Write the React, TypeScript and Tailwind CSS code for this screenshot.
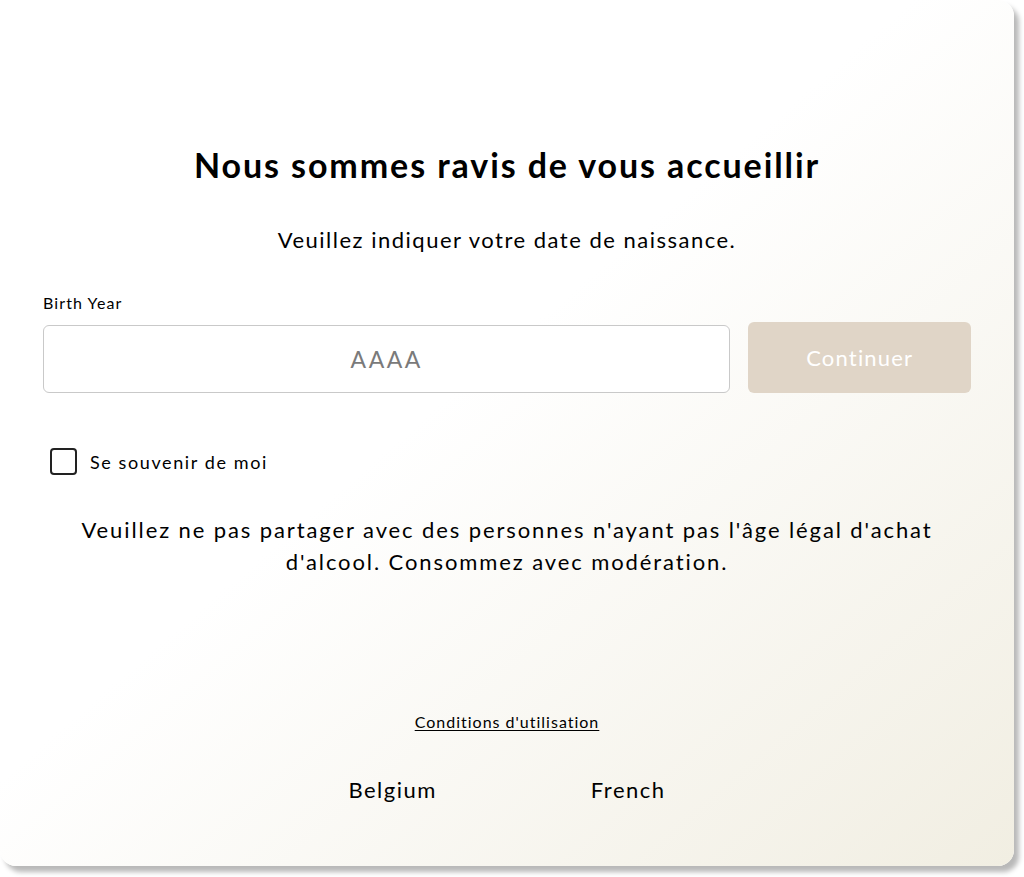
import { useState } from 'react';

export default function App() {
  const [remember, setRemember] = useState(false);
  const [year, setYear] = useState('');

  return (
    <div className="w-[1024px] h-[877px] bg-white overflow-hidden" style={{ fontFamily: 'Lato, "Open Sans", sans-serif' }}>
      <div className="w-[1014px] h-[866px] rounded-2xl bg-gradient-to-br from-white from-45% to-[#f1eee2] shadow-[5px_6px_5px_rgba(0,0,0,0.28)] flex flex-col items-center text-black px-[43px]">
        {/* Heading */}
        <h1 className="mt-[141px] text-[34px] font-bold leading-[48px] tracking-[1.9px]">Nous sommes ravis de vous accueillir</h1>
        <p className="mt-[36px] text-[22px] leading-[30px] tracking-[1.5px]">Veuillez indiquer votre date de naissance.</p>

        {/* Birth year form */}
        <div className="w-full mt-[37px]">
          <label className="block text-[16px] leading-[22px] tracking-[1.1px]">Birth Year</label>
          <div className="flex items-end gap-[18px] mt-[8px]">
            <input
              value={year}
              onChange={(e) => setYear(e.target.value)}
              placeholder="AAAA"
              className="w-[689px] h-[68px] rounded-md border border-[#c9c9c9] bg-white text-center text-[23px] tracking-[2.5px] placeholder:text-[#7a7a7a] outline-none"
            />
            <button className="w-[223px] h-[71px] rounded-md bg-[#e0d5c7] text-white text-[22px] tracking-[1.2px]">Continuer</button>
          </div>
        </div>

        {/* Remember me */}
        <div className="w-full mt-[55px] pl-[7px]">
          <label className="inline-flex items-center gap-[13px] cursor-pointer">
            <span
              onClick={() => setRemember(!remember)}
              className="w-[27px] h-[27px] rounded-[4px] border-2 border-[#222] bg-white"
            >
              {remember && (
                <svg viewBox="0 0 24 24" className="w-full h-full" fill="none" stroke="#222" strokeWidth="3">
                  <path d="M5 12l5 5 9-10" />
                </svg>
              )}
            </span>
            <span className="text-[18px] leading-[26px] tracking-[1.6px]">Se souvenir de moi</span>
          </label>
        </div>

        <p className="mt-[33px] text-[22px] leading-[32px] tracking-[1.9px] text-center max-w-[870px]">
          Veuillez ne pas partager avec des personnes n'ayant pas l'âge légal d'achat d'alcool. Consommez avec modération.
        </p>

        {/* Footer */}
        <a className="mt-[133px] text-[16px] leading-[22px] tracking-[1px] underline underline-offset-2">Conditions d'utilisation</a>
        <div className="mt-[42px] flex items-center gap-[154px] text-[22px] leading-[30px] tracking-[1.5px]">
          <span>Belgium</span>
          <span>French</span>
        </div>
      </div>
    </div>
  );
}
